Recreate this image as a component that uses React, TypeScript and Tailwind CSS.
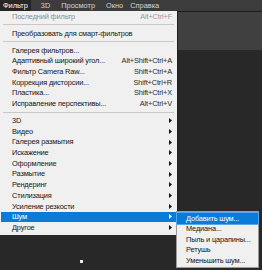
import React from 'react';

type Row =
  | { kind: 'sep' }
  | { kind: 'item'; label: string; shortcut?: string; sub?: boolean; disabled?: boolean; active?: boolean };

const rows: Row[] = [
  { kind: 'item', label: 'Последний фильтр', shortcut: 'Alt+Ctrl+F', disabled: true },
  { kind: 'sep' },
  { kind: 'item', label: 'Преобразовать для смарт-фильтров' },
  { kind: 'sep' },
  { kind: 'item', label: 'Галерея фильтров...' },
  { kind: 'item', label: 'Адаптивный широкий угол...', shortcut: 'Alt+Shift+Ctrl+A' },
  { kind: 'item', label: 'Фильтр Camera Raw...', shortcut: 'Shift+Ctrl+A' },
  { kind: 'item', label: 'Коррекция дисторсии...', shortcut: 'Shift+Ctrl+R' },
  { kind: 'item', label: 'Пластика...', shortcut: 'Shift+Ctrl+X' },
  { kind: 'item', label: 'Исправление перспективы...', shortcut: 'Alt+Ctrl+V' },
  { kind: 'sep' },
  { kind: 'item', label: '3D', sub: true },
  { kind: 'item', label: 'Видео', sub: true },
  { kind: 'item', label: 'Галерея размытия', sub: true },
  { kind: 'item', label: 'Искажение', sub: true },
  { kind: 'item', label: 'Оформление', sub: true },
  { kind: 'item', label: 'Размытие', sub: true },
  { kind: 'item', label: 'Рендеринг', sub: true },
  { kind: 'item', label: 'Стилизация', sub: true },
  { kind: 'item', label: 'Усиление резкости', sub: true },
  { kind: 'item', label: 'Шум', sub: true, active: true },
  { kind: 'item', label: 'Другое', sub: true },
];

const noise = ['Добавить шум...', 'Медиана...', 'Пыль и царапины...', 'Ретушь', 'Уменьшить шум...'];

function Arrow({ light }: { light?: boolean }) {
  return (
    <svg width="3" height="5" viewBox="0 0 3 5" className="shrink-0">
      <path d="M0 0 L3 2.5 L0 5 Z" fill={light ? '#ffffff' : '#111111'} />
    </svg>
  );
}

export default function App() {
  return (
    <div
      className="relative w-[262px] h-[270px] overflow-hidden bg-[#282828] text-[7.4px] leading-none tracking-[-0.15px]"
      style={{ fontFamily: '"Liberation Sans", Arial, sans-serif' }}
    >
      {/* menu bar */}
      <div className="flex h-[11px] items-center bg-[#3c3c3c] text-[#d6d6d6] tracking-normal">
        <div className="flex h-full items-center bg-[#262626] px-[3px] text-white">Фильтр</div>
        <div className="ml-[10px]">3D</div>
        <div className="ml-[11px]">Просмотр</div>
        <div className="ml-[11px]">Окно</div>
        <div className="ml-[7px]">Справка</div>
      </div>
      <div className="h-px bg-[#1e1e1e]" />
      <div className="h-[38px] bg-[#404040]" />

      {/* Filter menu */}
      <div className="absolute left-0 top-[11px] w-[178px] border-r border-[#202020] bg-[#f0f0f0] pb-[2px] text-[#141414]">
        {rows.map((r, i) =>
          r.kind === 'sep' ? (
            <div key={i} className="flex h-[6.3px] items-center pl-[3px] pr-[3px]">
              <div className="h-px w-full bg-[#c8c8c8]" />
            </div>
          ) : (
            <div
              key={i}
              className={`mx-[1px] flex h-[10.7px] items-center pl-[11px] pr-[4px] ${
                r.active ? 'bg-[#0a7bd8] text-white' : ''
              } ${r.disabled ? 'text-[#8e8e8e]' : ''}`}
            >
              <span className="flex-1 whitespace-nowrap">{r.label}</span>
              {r.shortcut && (
                <span className={`whitespace-nowrap ${r.disabled ? 'text-[#9a9a9a]' : 'text-[#2a2a2a]'}`}>
                  {r.shortcut}
                </span>
              )}
              {r.sub && <Arrow light={r.active} />}
            </div>
          )
        )}
      </div>

      {/* Noise submenu */}
      <div className="absolute left-[176px] top-[211px] w-[83px] border border-[#9a9a9a] bg-[#f0f0f0] py-[1px] text-[#141414]">
        {noise.map((n, i) => (
          <div
            key={n}
            className={`flex h-[10.6px] items-center pl-[9px] whitespace-nowrap ${
              i === 0 ? 'bg-[#0a7bd8] text-white outline outline-1 outline-[#5aa6e8]' : ''
            }`}
          >
            {n}
          </div>
        ))}
      </div>

      {/* scroll indicator */}
      <div className="absolute left-[80px] top-[260px] h-[3px] w-[3px] bg-[#e8e8e8]" />
    </div>
  );
}
